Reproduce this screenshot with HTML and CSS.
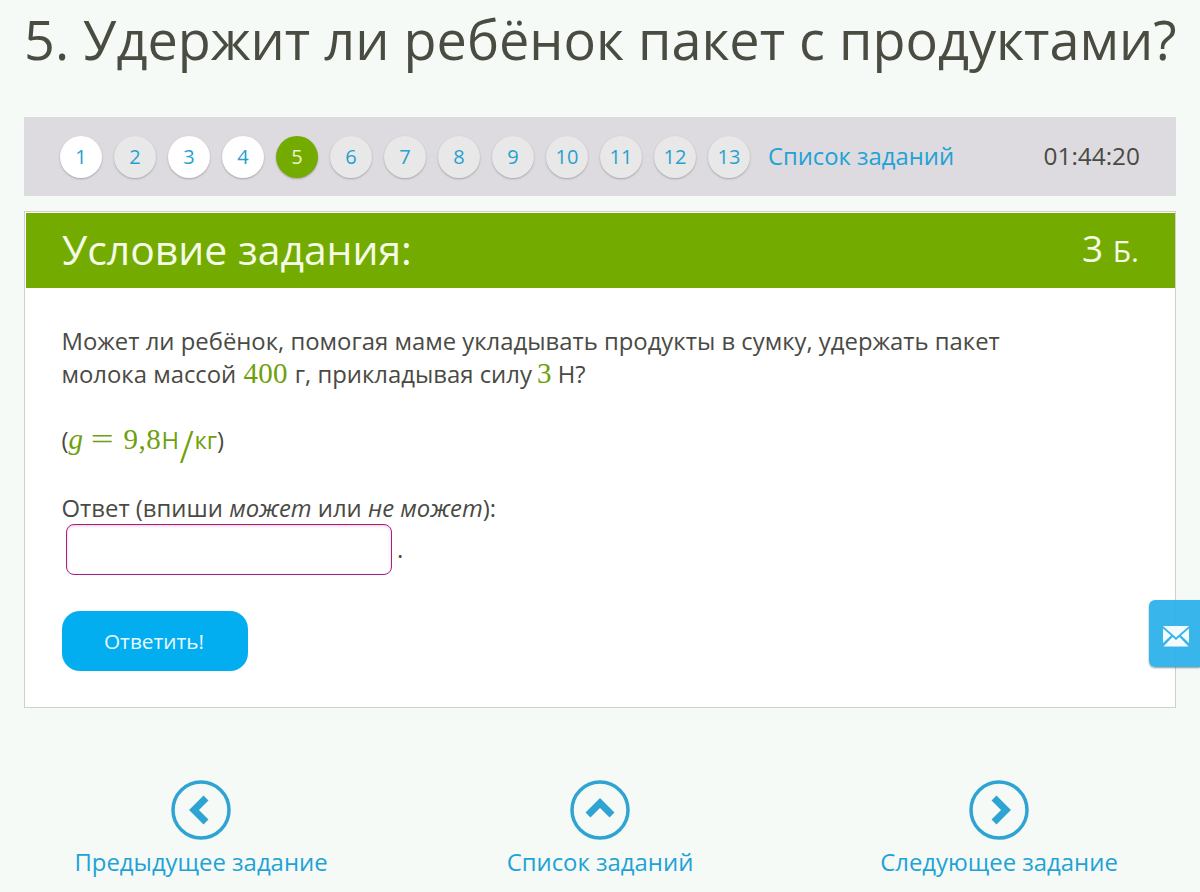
FILE: index.html
```html
<!DOCTYPE html>
<html lang="ru">
<head>
<meta charset="utf-8">
<title>Удержит ли ребёнок пакет с продуктами?</title>
<link rel="stylesheet" href="styles.css">
</head>
<body>
<div class="page">
  <h1 class="title">5. Удержит ли ребёнок пакет с продуктами?</h1>
  <nav class="tasks">
    <a class="num done">1</a><a class="num">2</a><a class="num done">3</a><a class="num done">4</a><a class="num current">5</a><a class="num">6</a><a class="num">7</a><a class="num">8</a><a class="num">9</a><a class="num">10</a><a class="num">11</a><a class="num">12</a><a class="num">13</a>
    <a class="list-link">Список заданий</a>
    <span class="timer">01:44:20</span>
  </nav>
  <section class="panel">
    <header class="panel-head">
      <h2 class="panel-title">Условие задания:</h2>
      <div class="points"><span class="points-n">3</span> <span class="points-u">Б.</span></div>
    </header>
    <div class="panel-body">
      <p class="para">Может ли ребёнок, помогая маме укладывать продукты в сумку, удержать пакет<br>молока массой <span class="math inline">400</span> г, прикладывая силу <span class="math tight">3</span> Н?</p>
      <p class="para formula">(<span class="math"><i class="var">g</i><span class="eq">=</span><span class="digits">9,8</span></span><span class="math-text">Н</span><span class="math slash">/</span><span class="math-text">кг</span>)</p>
      <p class="para answer-label">Ответ (впиши <em>может</em> или <em>не может</em>):</p>
      <div class="answer-row"><input class="answer" type="text" aria-label="Ответ"><span class="dot">.</span></div>
      <button class="submit" type="button">Ответить!</button>
    </div>
  </section>
  <footer class="bottom-nav">
    <a class="bottom-link">
      <svg class="round" viewBox="0 0 60 60" width="60" height="60"><circle cx="30" cy="30" r="28" fill="none" stroke="#2fa4d3" stroke-width="3.500"/><path d="M35 18 23 30 35 42" fill="none" stroke="#2fa4d3" stroke-width="7"/></svg>
      <span>Предыдущее задание</span>
    </a>
    <a class="bottom-link">
      <svg class="round" viewBox="0 0 60 60" width="60" height="60"><circle cx="30" cy="30" r="28" fill="none" stroke="#2fa4d3" stroke-width="3.500"/><path d="M18 35 30 23 42 35" fill="none" stroke="#2fa4d3" stroke-width="7"/></svg>
      <span>Список заданий</span>
    </a>
    <a class="bottom-link">
      <svg class="round" viewBox="0 0 60 60" width="60" height="60"><circle cx="30" cy="30" r="28" fill="none" stroke="#2fa4d3" stroke-width="3.500"/><path d="M25 18 37 30 25 42" fill="none" stroke="#2fa4d3" stroke-width="7"/></svg>
      <span>Следующее задание</span>
    </a>
  </footer>
</div>
<a class="feedback" aria-label="Написать">
  <svg viewBox="0 0 26 21" width="26" height="21"><path fill="#f4fbff" d="M0 0h26L13 11.500z"/><path fill="#f4fbff" d="M0 2.500 8 9.500 0 17zM26 2.500 18 9.500 26 17zM9.500 11 13 14 16.500 11 25.500 20.500H.5z"/></svg>
</a>
</body>
</html>
```
FILE: styles.css
```css
* { box-sizing: border-box; }
html, body { margin: 0; padding: 0; }
body {
  background: #f5faf7;
  color: #4a4a44;
  font-family: "Open Sans", "Noto Sans", sans-serif;
  height: 892px;
  overflow: hidden;
  position: relative;
}
.page { padding: 0 24px; }
.title {
  margin: 0;
  height: 117px;
  padding-top: 4px;
  font-size: 54px;
  line-height: 70px;
  font-weight: 400;
  white-space: nowrap;
  color: #4a4c42;
}
.tasks {
  height: 79px;
  background: #dddbdf;
  display: flex;
  align-items: center;
  padding: 0 36px;
  gap: 12px;
}
.num {
  width: 42px;
  height: 42px;
  flex: none;
  border-radius: 50%;
  background: #e8e8e8;
  box-shadow: 0 1px 2px rgba(0,0,0,.25);
  color: #29a0ce;
  font-size: 20px;
  line-height: 42px;
  text-align: center;
}
.num.done { background: #fff; }
.num.current { background: #73ab00; color: #e8f5c8; }
.list-link { color: #1fa2d6; font-size: 23.8px; margin: 0 0 2px 6px; }
.timer { margin: 0 0 2px auto; font-size: 24.4px; color: #4a4a44; }
.panel {
  margin-top: 15px;
  height: 497px;
  border: 1px solid #cfcfcb;
  background: #fff;
  padding: 1px 0 0 1px;
}
.panel-head {
  height: 75px;
  background: #73ab00;
  color: #f5fbe6;
  display: flex;
  align-items: center;
  justify-content: space-between;
  padding: 0 36px;
}
.panel-title { margin: 0 0 3px; font-size: 40.9px; font-weight: 400; line-height: 72px; }
.points { font-size: 37px; line-height: 71px; margin-bottom: 4px; }
.points-u { font-size: 30px; }
.panel-body { padding: 36px 36px 0; }
.para { margin: 0 0 0 -.5px; font-size: 23.87px; line-height: 33px; }
.math {
  font-family: "Liberation Serif", "DejaVu Serif", serif;
  color: #6f9f0c;
  font-size: 29px;
}
.math.inline { margin: 0 1px; letter-spacing: .2px; }
.math.tight { margin-left: -1px; }
.var { font-style: italic; }
.eq {
  display: inline-block;
  transform: scaleX(1.4);
  margin: 0 13px 0 11px;
  line-height: 0;
}
.digits { letter-spacing: .6px; }
.math-text { color: #6f9f0c; }
.slash {
  display: inline-block;
  font-size: 48px;
  line-height: 0;
  transform: translateY(14px);
  margin: 0 1px 0 1px;
}
.formula { margin-top: 33px; }
.answer-label { margin-top: 35px; }
.answer-row {
  display: flex;
  align-items: flex-end;
  padding-left: 4px;
  height: 50px;
  margin-top: 1px;
}
.answer {
  width: 326px;
  height: 51px;
  border: 1px solid #a5217f;
  border-radius: 8px;
  background: #fff;
  box-shadow: inset 0 1px 3px rgba(165,33,127,.25);
  outline: none;
}
.dot { margin: 0 0 8px 5px; font-size: 24px; line-height: 36px; }
.submit {
  display: block;
  margin-top: 36px;
  width: 186px;
  height: 60px;
  border: 0;
  border-radius: 18px;
  background: #02aeef;
  color: #e8f9ff;
  font-family: inherit;
  font-size: 20.8px;
  padding: 0 2px 0 0;
}
.bottom-nav {
  display: grid;
  grid-template-columns: repeat(3, 399px);
  justify-content: center;
  margin-top: 72px;
}
.bottom-link {
  display: flex;
  flex-direction: column;
  align-items: center;
  color: #1fa2d6;
  font-size: 23.9px;
  line-height: 33px;
}
.round { display: block; margin-bottom: 5px; }
.feedback {
  position: absolute;
  left: 1149px;
  top: 600px;
  width: 51px;
  height: 67px;
  background: rgba(45,178,234,.95);
  border-radius: 6px 0 0 6px;
  box-shadow: 0 1px 2px rgba(0,0,0,.4);
  display: flex;
  align-items: center;
  justify-content: center;
  padding: 5px 0 0 2px;
}
```
